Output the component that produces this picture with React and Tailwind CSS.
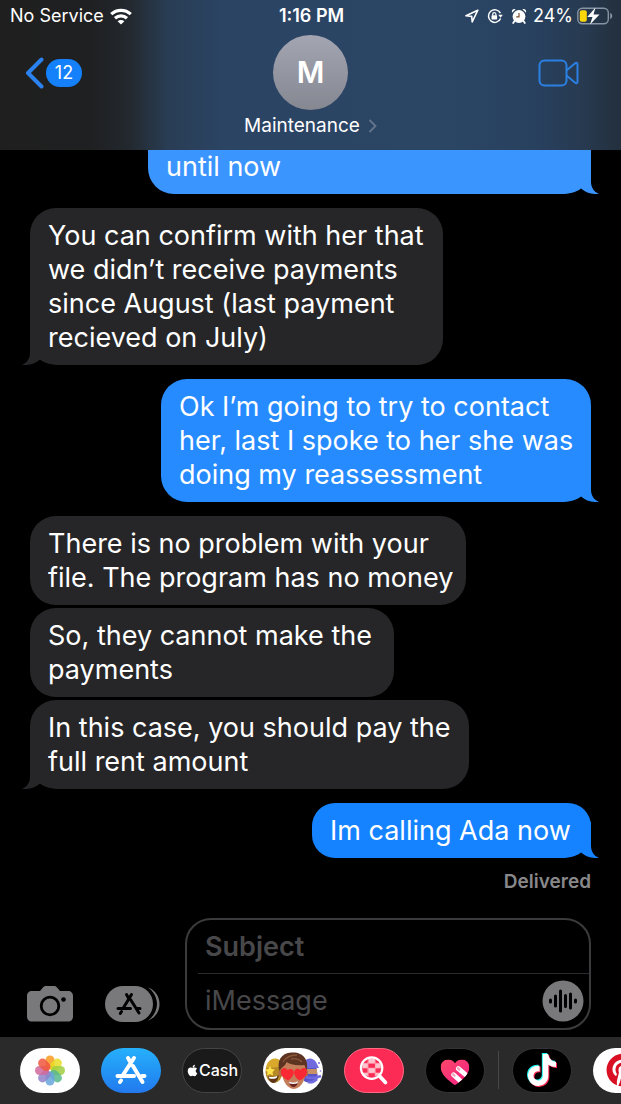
import { FaApple, FaPinterest, FaTiktok } from 'react-icons/fa';
import clsx from 'clsx';

const messages = [
  { from: 'me', tail: true, cut: true, width: 'w-[443px]', color: 'bg-[#3b95ff] text-[#3b95ff]', lines: ['until now'] },
  {
    from: 'them',
    tail: true,
    width: 'w-[413px]',
    lines: ['You can confirm with her that', 'we didn’t receive payments', 'since August (last payment', 'recieved on July)'],
  },
  {
    from: 'me',
    tail: true,
    width: 'w-[430px]',
    color: 'bg-[#268bff] text-[#268bff]',
    lines: ['Ok I’m going to try to contact', 'her, last I spoke to her she was', 'doing my reassessment'],
  },
  { from: 'them', width: 'w-[436px]', lines: ['There is no problem with your', 'file. The program has no money'] },
  { from: 'them', grouped: true, width: 'w-[364px]', lines: ['So, they cannot make the', 'payments'] },
  { from: 'them', grouped: true, tail: true, width: 'w-[439px]', lines: ['In this case, you should pay the', 'full rent amount'] },
  { from: 'me', tail: true, width: 'w-[279px]', color: 'bg-[#1582ff] text-[#1582ff]', lines: ['Im calling Ada now'] },
];

function WifiIcon() {
  return (
    <svg viewBox="0 0 22 17" className="h-[17px] w-[22px]" fill="none" stroke="white" strokeWidth="3.2">
      <path d="M1.2 6.2C6.8 1 15.2 1 20.8 6.2" />
      <path d="M5 10.2c3.5-3.2 8.5-3.2 12 0" />
      <path d="M11 16.5 7.6 13.2c2-1.7 4.8-1.7 6.8 0z" fill="white" stroke="none" />
    </svg>
  );
}

function LocationIcon() {
  return (
    <svg viewBox="0 0 14 14" className="size-[14px]" fill="none" stroke="white" strokeWidth="1.6" strokeLinejoin="round">
      <path d="M12.8 1.2 1 6.8l5.7.6.5 5.6z" />
    </svg>
  );
}

function RotationLockIcon() {
  return (
    <svg viewBox="0 0 16 16" className="size-4" fill="none" stroke="white" strokeWidth="1.5">
      <path d="M13.4 5.2A6.3 6.3 0 1 0 13.6 10.5" />
      <path d="M11.3 6.7h4.5l-2.2 3z" fill="white" stroke="none" />
      <rect x="4.5" y="7.2" width="5.6" height="4.2" rx=".6" fill="white" stroke="none" />
      <path d="M5.7 7.5V6.3a1.6 1.6 0 0 1 3.2 0v1.2" strokeWidth="1.2" />
    </svg>
  );
}

function AlarmIcon() {
  return (
    <svg viewBox="0 0 16 16" className="size-4" fill="white">
      <circle cx="8" cy="8.5" r="6.4" />
      <path d="M1 4.8C.2 2.3 2.2.5 4.6 1.3zM15 4.8c.8-2.5-1.2-4.3-3.6-3.5z" />
      <path d="m3.5 13-1.3 2M12.5 13l1.3 2" stroke="white" strokeWidth="1.8" strokeLinecap="round" />
      <path d="M8 5v3.8H5.2" fill="none" stroke="#7b4f35" strokeWidth="1.2" />
    </svg>
  );
}

function BatteryIcon() {
  return (
    <svg viewBox="0 0 36 18" className="h-[18px] w-9" fill="none">
      <rect x=".8" y="1.2" width="30.5" height="15.6" rx="4.5" stroke="#8794a4" strokeWidth="1.4" />
      <path d="M33.2 6v6c1.4-.5 2-1.6 2-3s-.6-2.5-2-3z" fill="#8794a4" />
      <rect x="2.8" y="3.2" width="7" height="11.6" rx="2" fill="#ffd60a" />
      <path d="M18.5.5 10.2 10h5.3L13 17.5l9.500-10h-6z" fill="white" />
    </svg>
  );
}

function StatusBar() {
  return (
    <div className="grid h-8 grid-cols-3 items-center pr-2 pl-[10px] text-lg leading-5">
      <div className="flex items-center gap-1.5 whitespace-nowrap">
        <span>No Service</span>
        <WifiIcon />
      </div>
      <div className="text-center font-semibold">1:16 PM</div>
      <div className="flex items-center justify-end gap-1">
        <div className="mr-0.5 flex items-center gap-2">
          <LocationIcon />
          <RotationLockIcon />
          <AlarmIcon />
        </div>
        <span>24%</span>
        <BatteryIcon />
      </div>
    </div>
  );
}

function Header() {
  return (
    <header className="flex h-[150px] shrink-0 flex-col bg-[linear-gradient(90deg,#1f1f1f_0%,#1f2022_15%,#23292f_21%,#293d54_27%,#2b4464_36%,#2b4565_72%,#28415f_86%,#273a50_94%,#232f3d_100%)]">
      <StatusBar />
      <div className="mt-[3px] grid grid-cols-[1fr_auto_1fr] items-center">
        <button aria-label="Back, 12 unread" className="ml-6 flex items-center gap-0.5 justify-self-start">
          <svg viewBox="0 0 20 32" className="h-8 w-5" fill="none" stroke="#2b82ee" strokeWidth="4" strokeLinecap="round" strokeLinejoin="round">
            <path d="M17.5 2.5 4 16l13.5 13.5" />
          </svg>
          <span className="flex h-7 w-9 items-center justify-center rounded-full bg-[#1481fb] text-lg leading-6">12</span>
        </button>
        <div className="flex size-[75px] items-center justify-center rounded-full bg-linear-to-b from-[#a3a5b2] to-[#858791] text-[30px] font-semibold">
          M
        </div>
        <button aria-label="FaceTime video" className="mr-[42px] justify-self-end">
          <svg viewBox="0 0 41 28" className="h-7 w-[41px]" fill="none" stroke="#2b80e4" strokeWidth="2" strokeLinejoin="round">
            <rect x="1.5" y="1.5" width="27" height="25" rx="5" />
            <path d="m28.5 11.5 8.7-7.3c1.1-.9 2.3-.4 2.3 1v17.600c0 1.4-1.2 1.9-2.3 1l-8.700-7.300" />
          </svg>
        </button>
      </div>
      <button className="mt-1 flex items-center gap-2 self-center text-[19px] leading-6">
        <span>Maintenance</span>
        <svg viewBox="0 0 9 14" className="h-[14px] w-[9px]" fill="none" stroke="#66768c" strokeWidth="1.8">
          <path d="m1.5 1 6 6-6 6" />
        </svg>
      </button>
    </header>
  );
}

// Fills the bubble's bottom corner and hooks 8px past its edge
function Tail({ mine }) {
  return (
    <svg
      viewBox="0 0 44 36"
      className={clsx('absolute bottom-0 h-9 w-11', mine ? '-right-2' : '-left-2 -scale-x-100')}
      fill="currentColor"
    >
      <path d="M0 0h36v24c0 5 3 10 8 12-7 .4-13-1-18-5.5C21 34.5 14 36 6 36H0z" />
    </svg>
  );
}

function Message({ from, lines, tail, grouped, cut, width, color }) {
  const mine = from === 'me';
  return (
    <li className={clsx('flex', mine && 'justify-end', !cut && (grouped ? 'mt-[3px]' : 'mt-[14px]'))}>
      <div
        className={clsx(
          'relative max-w-full pb-[10px] pl-[18px]',
          !cut && 'rounded-t-[26px] pt-[11px]',
          mine ? 'rounded-br-[36px] rounded-bl-[26px]' : 'rounded-br-[26px]',
          !mine && (tail ? 'rounded-bl-[36px]' : 'rounded-bl-[26px]'),
          mine ? color : 'bg-[#262628] text-[#262628]',
          width,
        )}
      >
        {tail && <Tail mine={mine} />}
        <p className="relative text-[27px] leading-[34px] whitespace-nowrap text-white">
          {lines.map((line) => (
            <span key={line} className="block">
              {line}
            </span>
          ))}
        </p>
      </div>
    </li>
  );
}

function CameraIcon() {
  return (
    <svg viewBox="0 0 46 36" className="h-9 w-[46px]">
      <path d="M5 5h8l3-3.5C17 .4 18 0 19.500 0h7c1.5 0 2.5.4 3.5 1.5L33 5h8c3 0 5 2 5 5v20.5c0 3-2 5-5 5H5c-3 0-5-2-5-5V10c0-3 2-5 5-5z" fill="#79797b" />
      <circle cx="23" cy="20" r="8.8" fill="none" stroke="black" strokeWidth="2.8" />
      <circle cx="36.5" cy="13.5" r="2.3" fill="black" />
    </svg>
  );
}

function DrawerIcon() {
  return (
    <svg viewBox="0 0 55 36" className="h-9 w-[55px]" fill="none">
      <path d="M43 1.5C50 4 54.5 10 54.5 18S50 32 43 34.5c5.5-4 9-10 9-16.500S48.5 5.500 43 1.500z" fill="#79797b" />
      <rect width="48" height="36" rx="18" fill="#79797b" />
      <path
        d="m21.5 8.5 2.4 4.2M26.500 8.500l-8.500 14M13 22.500h12.500M31.500 22.500H35M25.500 13.500 34 27M16.500 25.500 15.300 27.500"
        stroke="black"
        strokeWidth="3"
        strokeLinecap="round"
      />
    </svg>
  );
}

function AudioIcon() {
  return (
    <svg viewBox="0 0 42 42" className="size-[42px]">
      <circle cx="21" cy="21" r="20.5" fill="#79797b" />
      <path d="M8.5 20v2M13.5 16v10M18.5 11v20M23.5 15.5v11M28.5 14v14M33.5 20v2" stroke="black" strokeWidth="3" strokeLinecap="round" />
    </svg>
  );
}

function Composer() {
  return (
    <form className="mt-auto flex items-end pr-[30px] pb-[7px] pl-[27px]">
      <button type="button" aria-label="Camera" className="mb-2">
        <CameraIcon />
      </button>
      <button type="button" aria-label="Apps" className="mb-2 ml-8">
        <DrawerIcon />
      </button>
      <div className="ml-[25px] min-w-0 flex-1 rounded-[26px] border-2 border-[#3b3b3d] pl-[11px]">
        <input
          aria-label="Subject"
          placeholder="Subject"
          className="h-[54px] w-full border-b border-[#2c2c2e] bg-transparent pl-[7px] text-[27px] font-semibold outline-none placeholder:text-[#48484a]"
        />
        <div className="flex h-[54px] items-center pr-[5px]">
          <input
            aria-label="iMessage"
            placeholder="iMessage"
            className="min-w-0 flex-1 bg-transparent pl-[7px] text-[27px] outline-none placeholder:text-[#48484a]"
          />
          <button type="button" aria-label="Record audio">
            <AudioIcon />
          </button>
        </div>
      </div>
    </form>
  );
}

const petals = ['#f89a1e', '#e9dc26', '#9fce3f', '#58b98a', '#67a5dc', '#8f82c8', '#d0699c', '#f0563f'];

function PhotosArt() {
  return (
    <svg viewBox="0 0 60 45" className="h-full w-full">
      {petals.map((fill, i) => (
        <rect key={fill} x="25.5" y="7.5" width="9" height="14" rx="4.5" fill={fill} fillOpacity=".85" transform={`rotate(${i * 45} 30 22.5)`} />
      ))}
    </svg>
  );
}

function AppStoreArt() {
  return (
    <svg viewBox="0 0 60 45" className="h-full w-full" fill="none" stroke="white" strokeWidth="4" strokeLinecap="round">
      <path d="m27 10 2 3.5M33 10 22 27M16.500 28H33M41 28h2.500M32 18l9.500 16M20 32.500l-1 1.500" />
    </svg>
  );
}

function MemojiArt() {
  return (
    <svg viewBox="0 0 60 45" className="h-full w-full">
      <ellipse cx="11" cy="24" rx="8.5" ry="11" fill="#b58a24" />
      <path d="M3 20c1-11 14-13 17-3l-4 2z" fill="#d9a92c" />
      <path d="m7 18 1.5 3 3.5.5-2.5 2.5.5 3.5-3-1.5-3 1.5.5-3.5L2 21.5l3.5-.5z" fill="#ffe14a" />
      <path d="M5 28c4 1.5 7 1 11-1-1 5-3 8-6 8-3-.5-4.5-3-5-7z" fill="#5d3516" />
      <path d="M5.5 28.5c3 1 6 .8 9-.8l-1 2.300c-2.500 1-5 1-7 .5z" fill="white" />
      <path d="M41 15c4-5 10-4 12 1l2 14c-3 5-9 6-14 3z" fill="#5a55c7" />
      <path d="M43 21h11v5H43z" fill="#c79065" />
      <path d="M41 14c4-5 9-4 12 0l3 6H42z" fill="#6f6add" />
      <path d="M43 29c5 2 10 1 15-1M45 34c4 1 7-1 9-3" stroke="#706be0" strokeWidth="2.5" fill="none" />
      <circle cx="56" cy="15" r="1" fill="#776bea" />
      <circle cx="57.5" cy="23" r=".8" fill="#776bea" />
      <path d="M18 17c0-9 24-10 25 0 1 13-4 23-12 24-8-.5-13-10-13-24z" fill="#c47e59" />
      <ellipse cx="17.5" cy="25" rx="2" ry="3.5" fill="#b06d48" />
      <ellipse cx="43" cy="25" rx="2" ry="3.5" fill="#b06d48" />
      <path d="M16.5 23c-3-9 1-18 12-18.5 11-1 18 7 15 18.5l-2-6c-9 1-15-1-18-3-1 4-4 4-7 9z" fill="#5d3421" />
      <path d="M20 14c3-5 8-7 14-7M28 11c4-1 8 0 11 3" stroke="#8a5638" strokeWidth="1.3" fill="none" />
      <path
        d="M25 32.5c-6-3-8.5-7.5-6.5-11 1.5-2.5 5-2 6 .8 1.5-2 5-1.8 6 .4 1.2 3-1.5 7.5-5.5 9.8zM37 32.5c-4-2-7-6.5-5.5-9.8 1-2.4 4.5-2.6 6-.4 1-2.5 4.7-3 6-.8 1.5 4-1 8-6.500 11z"
        fill="#fa2832"
      />
      <path d="M26 34c3 1 6 1 9-.5-.5 4-2.5 5.5-4.500 5.500S26.500 37.500 26 34z" fill="#6a2420" />
      <path d="M26 33.800c3 1 6 1 9-.5l-.5 2c-2.500 1-5.500 1-8 .3z" fill="white" />
    </svg>
  );
}

function SearchArt() {
  return (
    <svg viewBox="0 0 60 45" className="h-full w-full" fill="none" stroke="white">
      <path d="M18 15h6v5h-6zM24 10h7v5h-7zM31 15h6v5h-6zM24 20h7v5h-7zM18 25h6v3h-6zM31 25h6v3h-6z" fill="#ffc4ce" stroke="none" />
      <path d="M24 10c-1 6-1 14 0 20M31 10c1 6 1 14 0 20M17 15h21M17 20h21M17 25h21" strokeWidth=".7" stroke="#ff9fb0" />
      <circle cx="27.5" cy="20" r="11.2" strokeWidth="2.3" />
      <path d="m36 28.5 6 6.5" strokeWidth="4" strokeLinecap="round" />
    </svg>
  );
}

function TouchArt() {
  return (
    <svg viewBox="0 0 60 45" className="h-full w-full">
      <defs>
        <linearGradient id="heart" x1="0" y1="0" x2="1" y2="1">
          <stop offset="0" stopColor="#fb4a68" />
          <stop offset="1" stopColor="#f51d86" />
        </linearGradient>
        <clipPath id="heart-shape">
          <path d="M30 38C22 32 15 26 15 19c0-4.5 3.5-8 8-8 3 0 5.5 1.5 7 4 1.5-2.5 4-4 7-4 4.5 0 8 3.5 8 8 0 7-7 13-15 19z" />
        </clipPath>
      </defs>
      <g clipPath="url(#heart-shape)">
        <rect x="14" y="10" width="32" height="29" fill="url(#heart)" />
        <path d="m28.5 27 12 11M33.5 20.5l12 10" stroke="white" strokeWidth="5" strokeLinecap="round" />
        <path d="m28 26.5 1.5 1.5M33 20l1.5 1.5" stroke="#e9a9bc" strokeWidth="2.5" strokeLinecap="round" />
      </g>
    </svg>
  );
}

function TiktokArt() {
  return (
    <span className="relative size-8">
      <FaTiktok className="absolute -top-px -left-px size-8 text-[#25f4ee]" />
      <FaTiktok className="absolute top-px left-px size-8 text-[#fe2c55]" />
      <FaTiktok className="absolute top-0 left-0 size-8 text-white" />
    </span>
  );
}

function AppPill({ label, className, children }) {
  return (
    <button aria-label={label} className={clsx('flex h-[45px] w-[60px] shrink-0 items-center justify-center overflow-hidden rounded-full', className)}>
      {children}
    </button>
  );
}

function AppStrip() {
  return (
    <nav className="flex h-[68px] shrink-0 items-center gap-[21px] overflow-hidden bg-[#2a2a2b] pb-0.5 pl-5">
      <AppPill label="Photos" className="bg-white">
        <PhotosArt />
      </AppPill>
      <AppPill label="App Store" className="bg-linear-to-b from-[#27b0fb] to-[#2379ee]">
        <AppStoreArt />
      </AppPill>
      <AppPill label="Apple Cash" className="border border-[#444446] bg-[#1a1a1b] text-base font-medium text-white">
        <FaApple className="size-[13px] shrink-0" />
        <span>Cash</span>
      </AppPill>
      <AppPill label="Memoji" className="bg-white">
        <MemojiArt />
      </AppPill>
      <AppPill label="Images" className="border border-[#ff6a82] bg-[#fc2b55]">
        <SearchArt />
      </AppPill>
      <AppPill label="Digital Touch" className="border border-[#343436] bg-black">
        <TouchArt />
      </AppPill>
      <div className="-mx-2 h-[38px] w-px shrink-0 bg-[#48484a]" />
      <AppPill label="TikTok" className="border border-[#343436] bg-black">
        <TiktokArt />
      </AppPill>
      <AppPill label="Pinterest" className="bg-white">
        <FaPinterest className="size-[34px] text-[#d90f23]" />
      </AppPill>
    </nav>
  );
}

export default function App() {
  return (
    <div className="flex min-h-screen flex-col overflow-hidden bg-black font-['Inter',sans-serif] text-white">
      <Header />
      <main className="flex flex-1 flex-col">
        <ul className="px-[30px]">
          {messages.map((message) => (
            <Message key={message.lines[0]} {...message} />
          ))}
        </ul>
        <p className="mt-3 mb-6 pr-[30px] text-right text-[19px] leading-6 font-semibold text-[#88888b]">Delivered</p>
        <Composer />
      </main>
      <AppStrip />
    </div>
  );
}
